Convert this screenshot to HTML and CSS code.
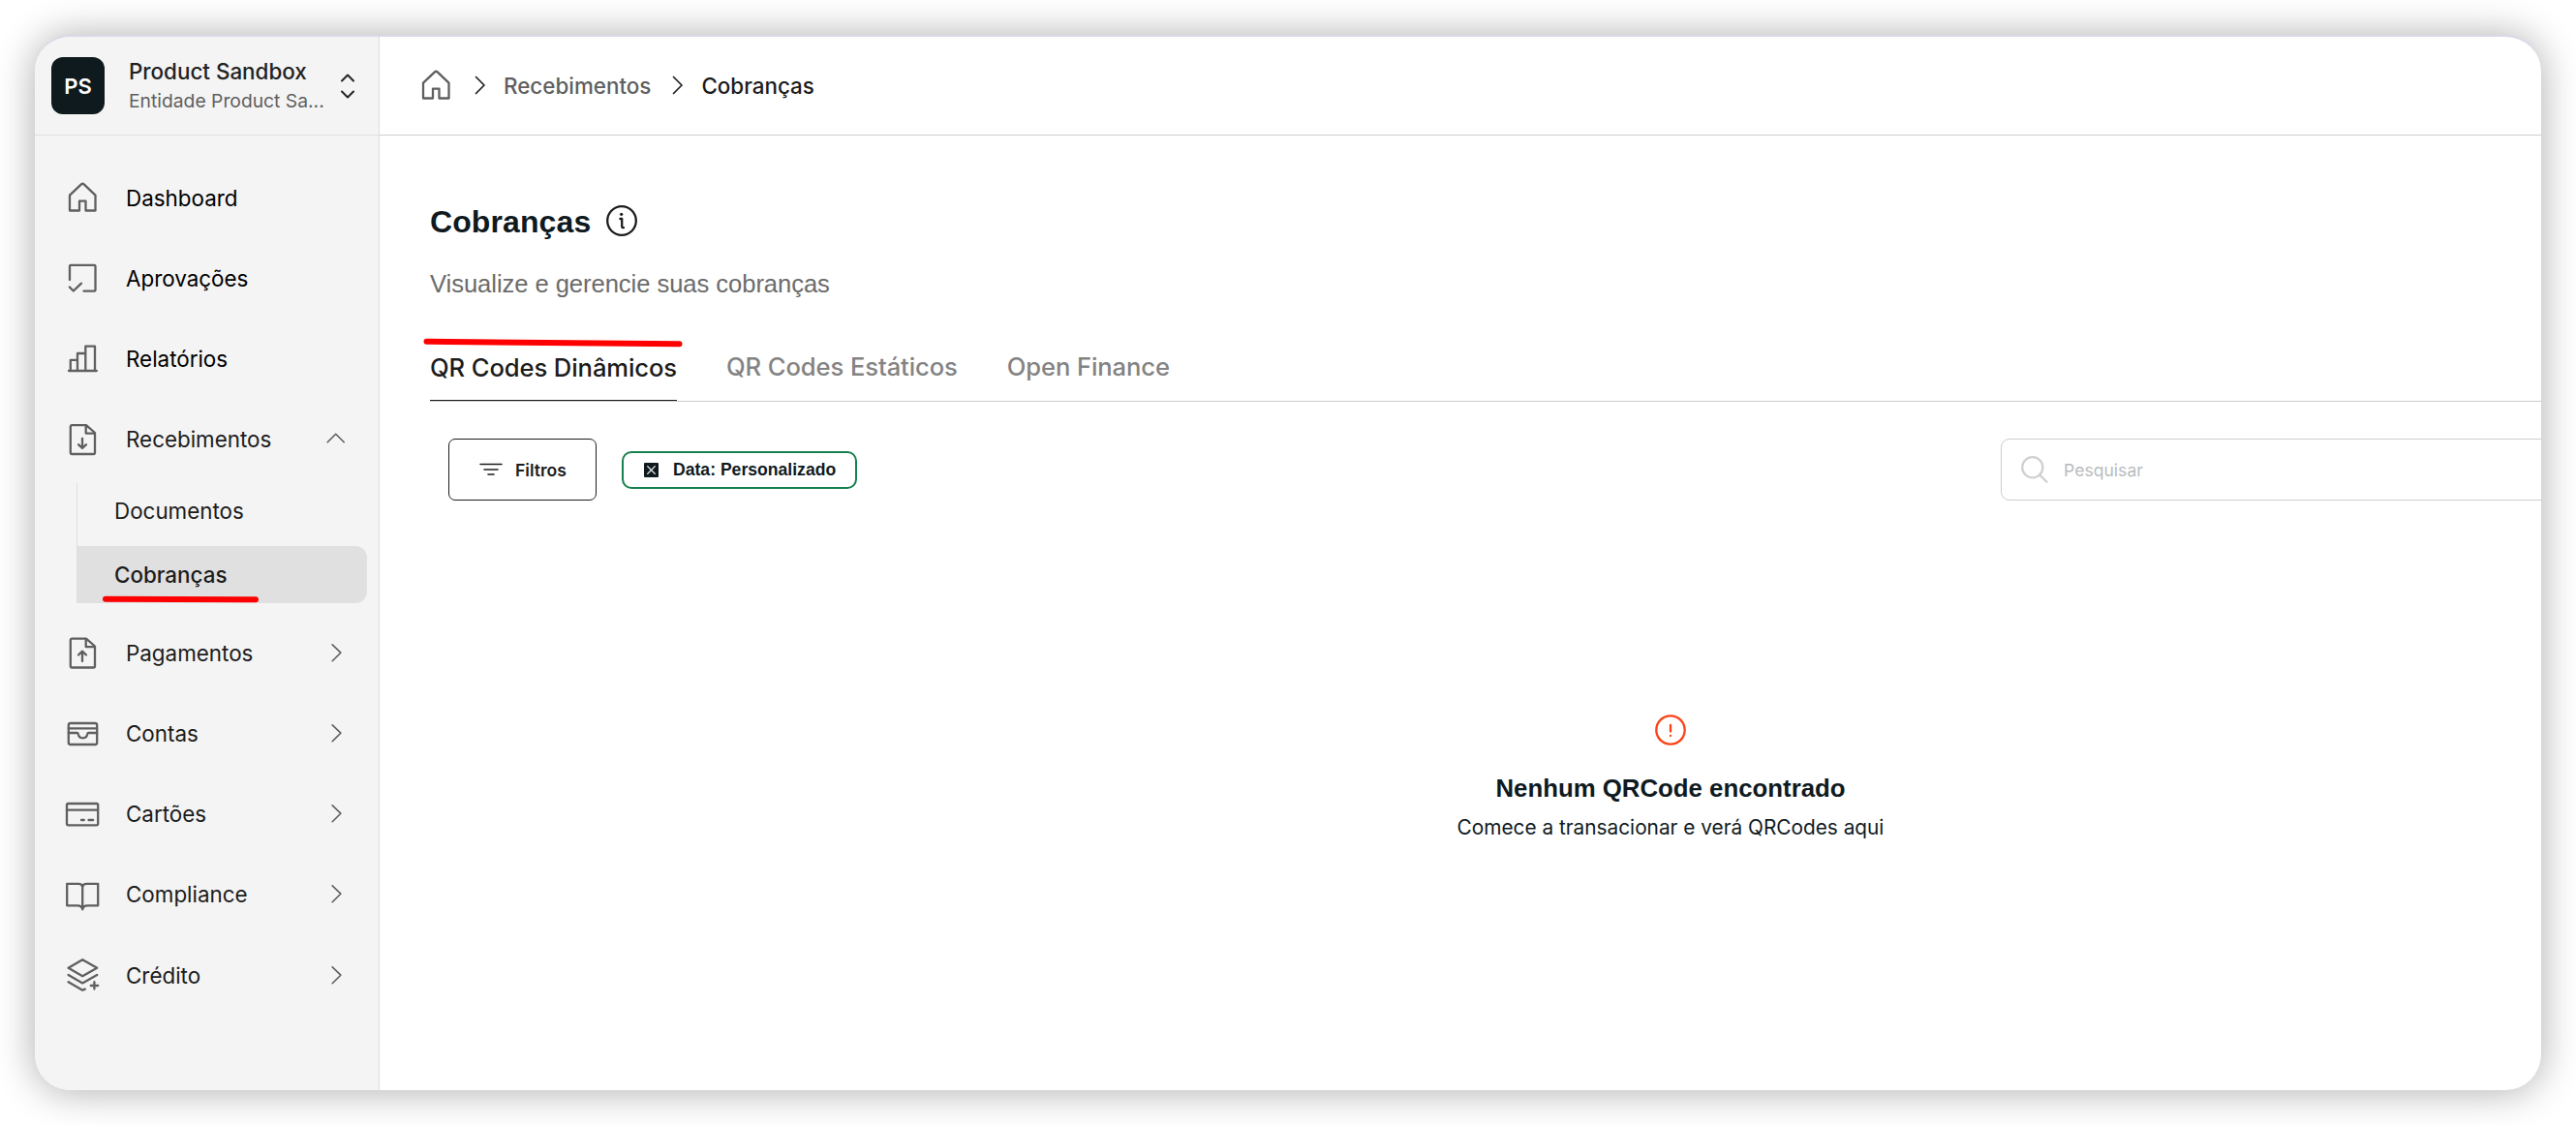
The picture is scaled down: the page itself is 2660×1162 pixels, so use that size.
FILE: index.html
```html
<!DOCTYPE html>
<html lang="pt-BR">
<head>
  <meta charset="UTF-8">
  <title>Cobranças</title>
  <link rel="stylesheet" href="styles.css">
</head>
<body>
<div class="window">
  <div class="sidebar">
    <div class="account">
      <div class="avatar">PS</div>
      <div class="account-text">
        <p class="account-name">Product Sandbox</p>
        <p class="account-entity">Entidade Product Sa...</p>
      </div>
      <svg class="account-arrows" viewBox="0 0 16 28"><path d="M2 8.5L8 2.5L14 8.5M2 19.5L8 25.5L14 19.5"/></svg>
    </div>

    <ul class="nav">
      <li class="nav-item nav-dark">
        <svg class="nav-icon" viewBox="0 0 36 37"><path d="M5 31.5V15.7L16.9 4.4Q18.3 3.2 19.7 4.4L31.5 15.7V31.5H21.5V21.7H15V31.5Z"/></svg>
        <span>Dashboard</span>
      </li>
      <li class="nav-item nav-dark">
        <svg class="nav-icon" viewBox="0 0 36 37"><path d="M5 20V6Q5 4.8 6.2 4.8H30.3Q31.5 4.8 31.5 6V30.5Q31.5 31.7 30.3 31.7H19.5M4.8 27.5L8.8 31.5L17 23.7"/></svg>
        <span>Aprovações</span>
      </li>
      <li class="nav-item nav-dark">
        <svg class="nav-icon" viewBox="0 0 36 37"><path d="M4 31H32.8M5.8 31V19.8H13M13 31V13H21.3M21.3 31V5.7H31V31"/></svg>
        <span>Relatórios</span>
      </li>
      <li class="nav-item">
        <svg class="nav-icon" viewBox="0 0 36 37"><path d="M7 4.2H22L31 12V32.6Q31 34 29.6 34H7.2Q5.8 34 5.8 32.6V5.6Q5.8 4.2 7 4.2ZM21.7 4.2V12.6H31M18 17.8V28M14 24.2L18 28L22 24.2"/></svg>
        <span>Recebimentos</span>
        <svg class="nav-arrow" viewBox="0 0 20 20"><path d="M1.2 12.7L9.7 4.3L18.2 12.7"/></svg>
      </li>
      <li>
        <ul class="subnav">
          <li>Documentos</li>
          <li class="current">Cobranças
            <svg class="mark-sub" viewBox="0 0 161 8"><path d="M3 3.8L158 4.2"/></svg>
          </li>
        </ul>
      </li>
      <li class="nav-item">
        <svg class="nav-icon" viewBox="0 0 36 37"><path d="M7 3.7H22L31 11.5V32.1Q31 33.5 29.6 33.5H7.2Q5.8 33.5 5.8 32.1V5.1Q5.8 3.7 7 3.7ZM21.7 3.7V12.1H31M18 27V16.7M14 20.5L18 16.7L22 20.5"/></svg>
        <span>Pagamentos</span>
        <svg class="nav-arrow" viewBox="0 0 20 20"><path d="M6.2 0.9L14.8 9.2L6.2 17.7"/></svg>
      </li>
      <li class="nav-item">
        <svg class="nav-icon" viewBox="0 0 36 37"><rect x="3.8" y="8" width="29.4" height="22" rx="2"/><path d="M3.8 13.3H33.2M3.8 18H12.5Q13.6 18 13.8 19.2Q14.6 23.3 18.5 23.3Q22.4 23.3 23.2 19.2Q23.4 18 24.5 18H33.2"/></svg>
        <span>Contas</span>
        <svg class="nav-arrow" viewBox="0 0 20 20"><path d="M6.2 0.9L14.8 9.2L6.2 17.7"/></svg>
      </li>
      <li class="nav-item">
        <svg class="nav-icon" viewBox="0 0 36 37"><rect x="2" y="8" width="32.2" height="22.3" rx="1.5"/><path d="M2 14.7H34M17 25H19.8M24.5 25H29.2"/></svg>
        <span>Cartões</span>
        <svg class="nav-arrow" viewBox="0 0 20 20"><path d="M6.2 0.9L14.8 9.2L6.2 17.7"/></svg>
      </li>
      <li class="nav-item">
        <svg class="nav-icon" viewBox="0 0 36 37"><path d="M18.2 11Q17.6 7.8 14 7.8H2.2V30.3H13Q17.6 30.3 18.2 34.3Q18.8 30.3 23.4 30.3H34.2V7.8H22.4Q18.8 7.8 18.2 11V34"/></svg>
        <span>Compliance</span>
        <svg class="nav-arrow" viewBox="0 0 20 20"><path d="M6.2 0.9L14.8 9.2L6.2 17.7"/></svg>
      </li>
      <li class="nav-item nav-last">
        <svg class="nav-icon" viewBox="0 0 36 37"><path d="M18.2 2.2L33.2 10.8L18.2 19.3L3.6 10.8ZM3.6 18L18.2 26.4L33.2 18M3.6 25.3L18.2 33.8L20.8 32.6M26.8 29H34.2M30.4 25.2V32.6"/></svg>
        <span>Crédito</span>
        <svg class="nav-arrow" viewBox="0 0 20 20"><path d="M6.2 0.9L14.8 9.2L6.2 17.7"/></svg>
      </li>
    </ul>
  </div>

  <div class="main">
    <div class="topbar">
      <svg class="home" viewBox="0 0 36 37"><path d="M5 31.5V15.7L16.9 4.4Q18.3 3.2 19.7 4.4L31.5 15.7V31.5H21.5V21.7H15V31.5Z"/></svg>
      <svg class="crumb-arrow" viewBox="0 0 12 20"><path d="M1.5 1.5L10 10L1.5 18.5"/></svg>
      <a href="#" class="crumb">Recebimentos</a>
      <svg class="crumb-arrow" viewBox="0 0 12 20"><path d="M1.5 1.5L10 10L1.5 18.5"/></svg>
      <a href="#" class="crumb crumb-current">Cobranças</a>
    </div>

    <div class="content">
      <div class="title">
        <h1>Cobranças</h1>
        <svg class="info" viewBox="0 0 32 32"><circle cx="16" cy="16" r="14.8"/><path d="M14.4 14H16.2V21.5Q16.2 23.2 18 23.2"/><circle class="dot" cx="15.7" cy="9.3" r="1.6"/></svg>
      </div>
      <p class="subtitle">Visualize e gerencie suas cobranças</p>

      <div class="tabs">
        <a href="#" class="tab active">QR Codes Dinâmicos
          <svg class="mark-tab" viewBox="0 0 268 10"><path d="M3.5 3.8L264.5 6.2"/></svg>
        </a>
        <a href="#" class="tab">QR Codes Estáticos</a>
        <a href="#" class="tab">Open Finance</a>
      </div>

      <div class="toolbar">
        <div class="filter">
          <svg viewBox="0 0 24 14"><path d="M1 1.5H23M5 7H19M9 12H15"/></svg>
          <span>Filtros</span>
        </div>
        <div class="chip">
          <svg viewBox="0 0 15 15"><rect width="15" height="15" rx="1"/><path d="M3.7 3.7L11.3 11.3M11.3 3.7L3.7 11.3"/></svg>
          <span>Data: Personalizado</span>
        </div>
        <div class="search">
          <svg viewBox="0 0 28 28"><circle cx="11.8" cy="11.8" r="10.6"/><path d="M19.3 19.5L26.4 26.6"/></svg>
          <span>Pesquisar</span>
        </div>
      </div>

      <div class="empty">
        <svg viewBox="0 0 32 32"><circle cx="16" cy="16" r="14.7"/><path d="M16 11V17.5M16 21.8V22"/></svg>
        <h2>Nenhum QRCode encontrado</h2>
        <p>Comece a transacionar e verá QRCodes aqui</p>
      </div>
    </div>
  </div>
</div>
</body>
</html>
```
FILE: styles.css
```css
* {
  margin: 0;
  padding: 0;
  box-sizing: border-box;
}

body {
  width: 2660px;
  height: 1162px;
  padding: 36px;
  background-color: #fff;
  font-family: Inter, "Liberation Sans", sans-serif;
  font-size: 22.4px;
  white-space: nowrap;
  overflow: hidden;
}

ul {
  list-style: none;
}

a {
  text-decoration: none;
}

svg {
  display: block;
  flex: none;
  fill: none;
  stroke: #5f5f5f;
  stroke-width: 2.3;
  stroke-linecap: round;
  stroke-linejoin: round;
}

.window {
  display: flex;
  width: 2588px;
  height: 1090px;
  border-top: 2px solid #d9d9ea;
  border-radius: 37px;
  background-color: #fff;
  box-shadow: 0 1px 40px rgba(0, 0, 0, 0.33);
  overflow: hidden;
}

/* sidebar */
.sidebar {
  flex: none;
  width: 356px;
  background-color: #f4f4f4;
  border-right: 1px solid #dedede;
}

.account {
  display: flex;
  align-items: center;
  height: 102px;
  padding-left: 17px;
  border-bottom: 1px solid #dedede;
}

.avatar {
  width: 55px;
  height: 59px;
  border-radius: 12px;
  background-color: #0f1a1f;
  color: #fff;
  font-size: 22px;
  font-weight: 600;
  line-height: 60px;
  text-align: center;
}

.account-text {
  width: 219px;
  margin-left: 24px;
  padding-left: 1px;
}

.account-name {
  color: #222;
  font-weight: 500;
  line-height: 31px;
}

.account-entity {
  color: #5f5f5f;
  font-size: 19.3px;
  line-height: 30px;
}

.account-arrows {
  width: 16px;
  height: 28px;
  stroke: #222;
  stroke-width: 2;
}

.nav {
  padding-top: 23px;
}

.nav-item {
  display: flex;
  align-items: center;
  height: 83px;
  padding: 0 34px 0 31px;
  color: #1c1c1c;
}

.nav-dark {
  color: #000;
}

.nav-last {
  margin-top: 1px;
}

.nav-icon {
  width: 36px;
  height: 37px;
  margin-right: 27px;
}

.nav-arrow {
  width: 20px;
  height: 20px;
  margin-left: auto;
  stroke-width: 1.6;
}

.subnav {
  margin: 4px 12px 10px 43px;
  border-left: 1px solid #dedede;
}

.subnav li {
  height: 58px;
  margin-bottom: 7px;
  padding-left: 38px;
  line-height: 58px;
  color: #1c1c1c;
}

.subnav .current {
  position: relative;
  height: 59px;
  margin: 0 0 0 -1px;
  padding-left: 39px;
  line-height: 60px;
  border-radius: 0 12px 12px 0;
  background-color: #e0e0e0;
  font-weight: 500;
}

/* red marker lines */
.mark-sub,
.mark-tab {
  position: absolute;
  stroke: #fe0000;
  stroke-width: 6;
}

.mark-sub {
  left: 27px;
  bottom: 0;
  width: 161px;
  height: 8px;
}

.mark-tab {
  left: -7px;
  top: -13px;
  width: 268px;
  height: 10px;
}

/* main */
.main {
  flex: 1;
  min-width: 0;
  overflow: hidden;
}

.topbar {
  display: flex;
  align-items: center;
  height: 102px;
  padding: 0 0 1px 40px;
  border-bottom: 1px solid #cdcdcd;
}

.home {
  width: 36px;
  height: 37px;
}

.crumb-arrow {
  width: 12px;
  height: 20px;
  margin: 0 18px 0 22px;
  stroke: #222;
  stroke-width: 1.7;
}

.crumb {
  color: #5f5f5f;
  font-weight: 500;
}

.crumb-current {
  color: #1c1c1c;
}

.content {
  width: 2614px;
  padding: 69px 0 0 52px;
}

.title {
  display: flex;
  align-items: center;
  height: 40px;
}

h1 {
  color: #0f1a1f;
  font-family: "Liberation Sans", sans-serif;
  font-size: 32px;
  letter-spacing: 0.1px;
}

.info {
  width: 32px;
  height: 32px;
  margin: 0 0 2px 16px;
  stroke: #1c1c1c;
}

.info .dot {
  fill: #1c1c1c;
  stroke: none;
}

.subtitle {
  margin-top: 29px;
  color: #6b6b6b;
  font-family: "Liberation Sans", sans-serif;
  font-size: 25.6px;
  letter-spacing: -0.06px;
  line-height: 30px;
}

.tabs {
  display: flex;
  height: 53px;
  margin-top: 54px;
  border-bottom: 1px solid #cdcdcd;
}

.tab {
  position: relative;
  margin-right: 51px;
  color: #838383;
  font-size: 25.6px;
  font-weight: 500;
  letter-spacing: -0.1px;
  line-height: 34px;
}

.tab.active {
  border-bottom: 1px solid #1c1c1c;
  color: #1c1c1c;
  line-height: 36px;
}

.toolbar {
  display: flex;
  align-items: center;
  height: 64px;
  margin-top: 38px;
  padding: 0 19px;
  font-size: 17.6px;
}

.filter {
  display: flex;
  align-items: center;
  width: 153px;
  height: 64px;
  padding-left: 31px;
  border: 1px solid #1c1c1c;
  border-radius: 7px;
  color: #1c1c1c;
  font-weight: 600;
}

.filter svg {
  width: 24px;
  height: 14px;
  margin-right: 13px;
  stroke: #1c1c1c;
  stroke-width: 1.6;
}

.chip {
  display: flex;
  align-items: center;
  width: 243px;
  height: 39px;
  margin-left: 26px;
  padding-left: 21px;
  border: 2px solid #17804f;
  border-radius: 10px;
  color: #0f1a1f;
  font-family: "Liberation Sans", sans-serif;
  font-weight: bold;
}

.chip svg {
  width: 15px;
  height: 15px;
  margin-right: 15px;
  stroke: #fff;
  stroke-width: 1.2;
}

.chip span {
  padding-top: 1px;
}

.chip rect {
  fill: #0f1a1f;
  stroke: none;
}

.search {
  display: flex;
  align-items: center;
  width: 921px;
  height: 64px;
  margin-left: auto;
  padding-left: 20px;
  border: 1px solid #cdcdcd;
  border-radius: 9px;
  color: #b8bcbe;
}

.search svg {
  width: 28px;
  height: 28px;
  margin-right: 16px;
  stroke: #d0d0d0;
}

.empty {
  display: flex;
  flex-direction: column;
  align-items: center;
  margin-top: 221px;
  color: #0f1a1f;
}

.empty svg {
  width: 32px;
  height: 32px;
  stroke: #fb4117;
}

.empty h2 {
  margin-top: 28px;
  font-family: "Liberation Sans", sans-serif;
  font-size: 25.8px;
  line-height: 32px;
}

.empty p {
  margin-top: 9px;
  font-size: 20.8px;
  line-height: 32px;
}
```
